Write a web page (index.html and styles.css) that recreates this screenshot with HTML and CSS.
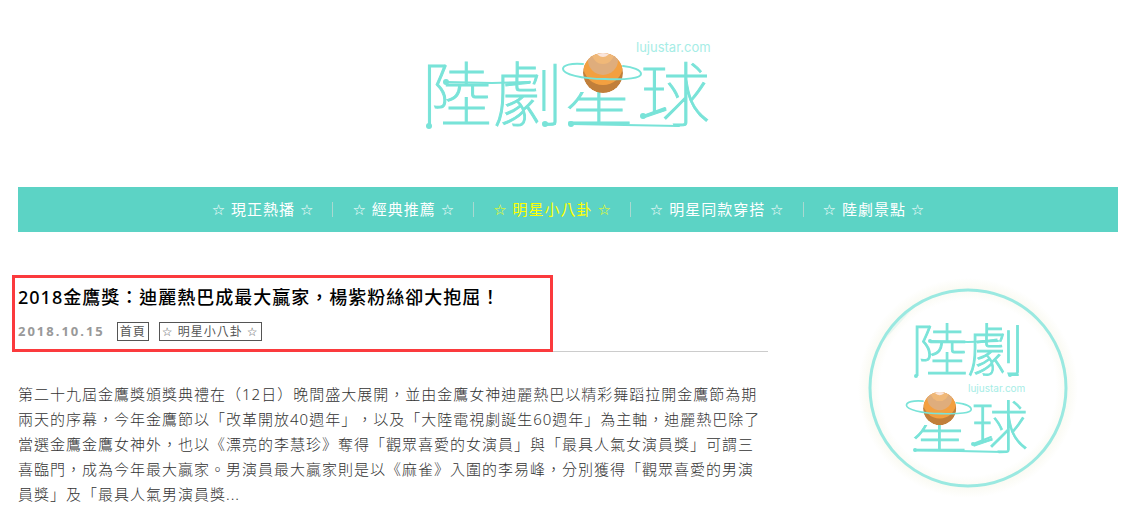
FILE: index.html
```html
<!DOCTYPE html>
<html lang="zh-Hant">
<head>
    <meta charset="UTF-8">
    <meta name="viewport" content="width=device-width, initial-scale=1.0">
    <title>陸劇星球</title>
    <link rel="stylesheet" href="styles.css">
</head>
<body>
    <div class="container">
        <header class="header">
            <a href="#" class="logo">
                <svg width="296" height="116" viewBox="419 32 296 116">
                    <defs>
                        <clipPath id="ball"><circle cx="602" cy="73" r="20"/></clipPath>
                        <g id="planet">
                            <g clip-path="url(#ball)">
                                <circle cx="602" cy="73" r="20" fill="#c17f3a"/>
                                <circle cx="602" cy="65" r="20" fill="#f3a040"/>
                                <circle cx="602" cy="60" r="15" fill="#dfad7c"/>
                                <circle cx="602" cy="53" r="11" fill="#f0b878"/>
                                <circle cx="602" cy="50" r="7" fill="#fae5dc"/>
                            </g>
                            <path class="logo-line" d="M582 64c-12-1-20 1-20 5c0 5 18 10 42 10c22 1 36-1 36-5c0-4-8-7-18-8"/>
                        </g>
                    </defs>
                    <g class="logo-text">
                        <text x="421" y="121">陸</text>
                        <text x="492" y="121">劇</text>
                        <text x="563" y="121">星</text>
                        <text x="639" y="121">球</text>
                    </g>
                    <text class="logo-url" x="635" y="52">lujustar.com</text>
                    <rect x="575" y="55" width="54" height="37" fill="#fff"/>
                    <use href="#planet"/>
                    <g class="logo-line">
                        <path d="M445 82l46 1 38-1M544 124h10M570 124l108 2M642 116l22-8"/>
                    </g>
                    <g fill="#79e3d8">
                        <circle cx="428" cy="126" r="3"/>
                        <circle cx="445" cy="82" r="3"/>
                        <circle cx="544" cy="124" r="3"/>
                        <circle cx="570" cy="124" r="3"/>
                        <circle cx="642" cy="116" r="3"/>
                    </g>
                </svg>
            </a>
        </header>

        <nav class="nav">
            <a href="#">☆ 現正熱播 ☆</a>
            <a href="#">☆ 經典推薦 ☆</a>
            <a href="#" class="active">☆ 明星小八卦 ☆</a>
            <a href="#">☆ 明星同款穿搭 ☆</a>
            <a href="#">☆ 陸劇景點 ☆</a>
        </nav>

        <div class="content">
            <article class="post">
                <div class="post-header">
                    <h1>2018金鷹獎：迪麗熱巴成最大贏家，楊紫粉絲卻大抱屈！</h1>
                    <div class="meta">
                        <time datetime="2018-10-15">2018.10.15</time>
                        <a href="#">首頁</a>
                        <a href="#">☆ 明星小八卦 ☆</a>
                    </div>
                </div>
                <p>第二十九屆金鷹獎頒獎典禮在（12日）晚間盛大展開，並由金鷹女神迪麗熱巴以精彩舞蹈拉開金鷹節為期兩天的序幕，今年金鷹節以「改革開放40週年」，以及「大陸電視劇誕生60週年」為主軸，迪麗熱巴除了當選金鷹金鷹女神外，也以《漂亮的李慧珍》奪得「觀眾喜愛的女演員」與「最具人氣女演員獎」可謂三喜臨門，成為今年最大贏家。男演員最大贏家則是以《麻雀》入圍的李易峰，分別獲得「觀眾喜愛的男演員獎」及「最具人氣男演員獎...</p>
            </article>

            <aside class="sidebar">
                <a href="#">
                    <svg width="220" height="220" viewBox="858 278 220 220">
                        <defs>
                            <radialGradient id="glow">
                                <stop offset="0.8" stop-color="#fff"/>
                                <stop offset="0.9" stop-color="#fafaf2"/>
                                <stop offset="1" stop-color="#fff"/>
                            </radialGradient>
                        </defs>
                        <circle cx="968" cy="388" r="110" fill="url(#glow)"/>
                        <path d="M880 345q8-24 36-40z" fill="#e8f6f0"/>
                        <circle cx="968" cy="388" r="98" fill="none" stroke="#9ae9e1" stroke-width="3"/>
                        <g class="badge-text">
                            <text x="911" y="371">陸</text>
                            <text x="967" y="371">劇</text>
                            <text x="911" y="448">星</text>
                            <text x="971" y="448">球</text>
                        </g>
                        <text class="badge-url" x="968" y="392">lujustar.com</text>
                        <rect x="916" y="394" width="50" height="31" fill="#fff"/>
                        <use href="#planet" transform="translate(440 348) scale(0.83)"/>
                        <g class="logo-line">
                            <path d="M930 341l38 1 30-1M1010 375h8M915 450l88 2M973 444l18-7"/>
                        </g>
                        <g fill="#79e3d8">
                            <circle cx="916" cy="376" r="2"/>
                            <circle cx="930" cy="341" r="2"/>
                            <circle cx="1010" cy="375" r="2"/>
                            <circle cx="915" cy="450" r="2"/>
                            <circle cx="973" cy="444" r="2"/>
                        </g>
                    </svg>
                </a>
            </aside>
        </div>
    </div>
</body>
</html>
```
FILE: styles.css
```css
body {
    margin: 0;
    background: #fff;
    color: #555;
    font-family: "Noto Sans", "DejaVu Sans", "Noto Sans CJK TC", sans-serif;
    font-size: 15px;
    letter-spacing: 1px;
    text-spacing-trim: space-all;
}
a {
    color: inherit;
    text-decoration: none;
}
svg {
    display: block;
}
.container {
    padding: 0 14px 0 18px;
}
.header {
    display: flex;
    justify-content: center;
    padding: 32px 0 39px;
}
.logo-text, .badge-text {
    font-family: "Noto Sans CJK TC", sans-serif;
    font-size: 70px;
    font-weight: 100;
    letter-spacing: 0;
    fill: #79e3d8;
    stroke: #79e3d8;
    stroke-width: 1;
}
.badge-text {
    font-size: 57px;
}
.logo-url, .badge-url {
    font-family: Inter, sans-serif;
    font-size: 13px;
    letter-spacing: 0;
    fill: #a6ede6;
}
.badge-url {
    font-size: 10px;
}
.logo-line {
    fill: none;
    stroke: #79e3d8;
    stroke-width: 2;
    stroke-linecap: round;
}
.nav {
    display: flex;
    justify-content: center;
    align-items: center;
    height: 45px;
    background: #5cd3c5;
    color: #fff;
}
.nav a {
    line-height: 15px;
    padding: 0 18px 0 19px;
    border-right: 1px solid #a9d9d0;
}
.nav a:last-child {
    border-right: none;
}
.nav a:hover, .nav .active {
    color: #ff0;
}
.content {
    display: flex;
    align-items: flex-start;
    gap: 90px;
    padding-top: 43px;
}
.post {
    flex: 1;
}
.post-header {
    position: relative;
    padding: 10px 0;
    border-bottom: 1px solid #ccc;
}
/* highlight frame around the title block */
.post-header::after {
    content: "";
    position: absolute;
    top: 0;
    left: -6px;
    width: 535px;
    height: 71px;
    border: 3px solid #fb3a3d;
    pointer-events: none;
}
.post h1 {
    margin: 0;
    color: #000;
    font-size: 18px;
    font-weight: 500;
    line-height: 24px;
}
.meta {
    display: flex;
    align-items: center;
    margin-top: 13px;
    font-size: 12px;
    line-height: 17px;
}
.meta time {
    margin-right: 12px;
    color: #999;
    font-size: 13px;
    font-weight: bold;
    letter-spacing: 2px;
}
.meta a {
    margin-right: 10px;
    padding: 0 2px;
    border: 1px solid #555;
}
.post p {
    margin: 30px 0 0;
    color: #333;
    font-weight: 300;
    line-height: 25px;
}
.sidebar {
    margin-right: 40px;
    padding-top: 3px;
}
```
